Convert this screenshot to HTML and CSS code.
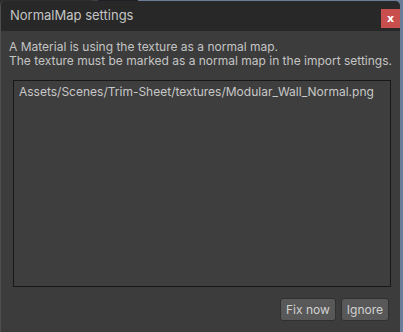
FILE: index.html
```html
<!DOCTYPE html>
<html lang="en">
<head>
    <meta charset="UTF-8">
    <meta name="viewport" content="width=device-width, initial-scale=1.0">
    <title>NormalMap settings</title>
    <link rel="stylesheet" href="styles.css">
</head>
<body>
    <div class="window">
        <div class="titlebar">
            <span class="title">NormalMap settings</span>
            <button class="close">x</button>
        </div>
        <div class="content">
            <p class="message">A Material is using the texture as a normal map.<br>The texture must be marked as a normal map in the import settings.</p>
            <div class="list">
                <div class="item">Assets/Scenes/Trim-Sheet/textures/Modular_Wall_Normal.png</div>
            </div>
            <div class="actions">
                <button class="btn">Fix now</button>
                <button class="btn">Ignore</button>
            </div>
        </div>
    </div>
</body>
</html>
```

FILE: styles.css
```css
body {
  margin: 0;
  height: 332px;
  overflow: hidden;
  font-family: 'Inter', 'Noto Sans', sans-serif;
  background: linear-gradient(to right, #2e2e2e 0, #2e2e2e 92px, #3a3f48 92px, #3a3f48 98px, #1f2126 98px, #1f2126 138px, #6a7c98 138px);
}

.window {
  margin-top: 1px;
  width: 400px;
  height: 331px;
  display: flex;
  flex-direction: column;
  background-color: #3c3c3c;
  border-left: 1px solid #4e4e4e;
  border-radius: 5px 5px 0 0;
  overflow: hidden;
  box-sizing: border-box;
}

.titlebar {
  height: 30px;
  flex-shrink: 0;
  display: flex;
  align-items: center;
  justify-content: space-between;
  padding: 0 0 0 9px;
  background-color: #282828;
}

.title {
  font-size: 13px;
  color: #c4c4c4;
  margin-top: -2px;
}

.close {
  width: 19px;
  height: 19px;
  margin-top: 4px;
  padding: 0;
  border: none;
  background-color: #c94f4f;
  color: #fff;
  font-family: 'DejaVu Sans', sans-serif;
  font-weight: bold;
  font-size: 11px;
  line-height: 17px;
}

.content {
  flex: 1;
  display: flex;
  flex-direction: column;
  padding: 9px 8px 9px 8px;
}

.message {
  margin: 0;
  font-size: 12px;
  line-height: 14px;
  color: #c4c4c4;
}

.list {
  height: 199px;
  margin: 12px 1px 0 4px;
  border: 1px solid #181818;
  background-color: #3e3e3e;
  padding: 3px 5px;
}

.item {
  font-size: 12px;
  line-height: 16px;
  color: #c8c8c8;
}

.actions {
  display: flex;
  justify-content: flex-end;
  gap: 5px;
  margin-top: 11px;
  padding-right: 3px;
}

.btn {
  height: 23px;
  padding: 0 5px;
  border: 1px solid #303030;
  border-radius: 3px;
  background-color: #585858;
  color: #d2d2d2;
  font-family: 'Inter', 'Noto Sans', sans-serif;
  font-size: 12px;
}
```
